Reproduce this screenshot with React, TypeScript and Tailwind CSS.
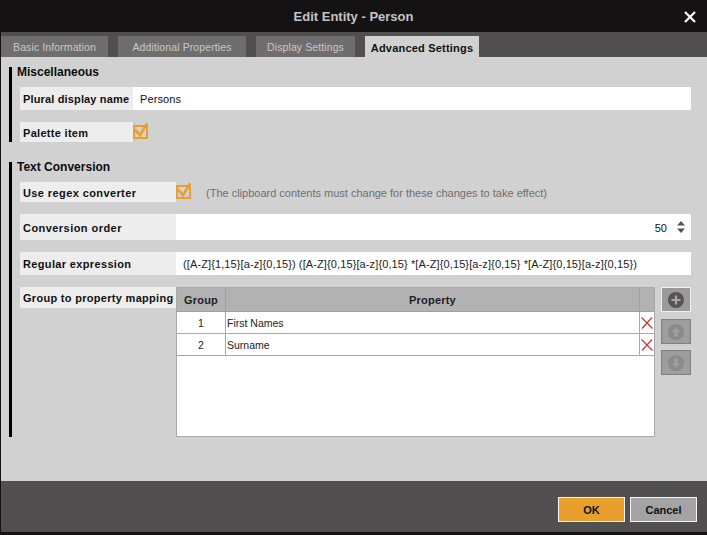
import React from "react";

function Check() {
  return (
    <div className="relative w-[15px] h-[14px] mt-[3px] border-2 border-[#e89f2b]">
      <svg className="absolute left-[-2px] top-[-5px]" width="18" height="18" viewBox="0 0 18 18">
        <path d="M2 7.5 L7 13.2 L14 1.4" fill="none" stroke="#e89f2b" strokeWidth="2.6" />
      </svg>
    </div>
  );
}

function Section({ title, children, className }: { title: string; children: React.ReactNode; className: string }) {
  return (
    <section className={`flex ${className}`}>
      <div className="w-[3px] bg-black" />
      <div className="flex-1 pl-[5px]">
        <h2 className="h-[20px] leading-[10px] text-[12px] font-bold text-[#0d0d0d]">{title}</h2>
        {children}
      </div>
    </section>
  );
}

function Label({ w, h, tracking, children }: { w: string; h: string; tracking: string; children: React.ReactNode }) {
  return (
    <div className={`${w} ${h} ${tracking} shrink-0 bg-[#ededed] pl-[3px] pt-[2px] flex items-center text-[11px] font-bold text-[#111] whitespace-nowrap`}>
      {children}
    </div>
  );
}

function Row({ group, name }: { group: string; name: string }) {
  return (
    <div className="flex h-[22px] border-b border-[#a9a9a9] text-[10.5px] text-[#222]">
      <div className="w-[49px] pt-[2px] border-r border-[#a9a9a9] flex items-center justify-center">{group}</div>
      <div className="flex-1 pt-[2px] pl-[1px] flex items-center">{name}</div>
      <div className="w-[15px] border-l border-[#a9a9a9] flex items-center justify-center">
        <svg width="12" height="12" viewBox="0 0 12 12">
          <path d="M0.5 0.5 L11.5 11.5 M11 0.5 L1 11.5" stroke="#b8403f" strokeWidth="1.3" fill="none" />
        </svg>
      </div>
    </div>
  );
}

function SideButton({ active, dir, className }: { active?: boolean; dir: "plus" | "up" | "down"; className?: string }) {
  const fill = active ? "#555354" : "#8a8a8a";
  return (
    <div className={`w-[30px] h-[25px] flex items-center justify-center border ${active ? "border-[#f2f2f2] bg-[#9a9a9a]" : "border-[#808080] bg-[#9d9d9d]"} ${className ?? ""}`}>
      <svg width="16" height="16" viewBox="0 0 16 16">
        <circle cx="8" cy="8" r="8" fill={fill} />
        {dir === "plus" && <path d="M8 3.5V12.5M3.5 8H12.5" stroke="#a9a9a9" strokeWidth="2.2" />}
        {dir === "up" && <path d="M8 3 L12.5 8 H10 V12.5 H6 V8 H3.5 Z" fill="#9d9d9d" />}
        {dir === "down" && <path d="M8 13 L12.5 8 H10 V3.5 H6 V8 H3.5 Z" fill="#9d9d9d" />}
      </svg>
    </div>
  );
}

const tabs = [
  { t: "Basic Information", w: "w-[107px]" },
  { t: "Additional Properties", w: "w-[128px]" },
  { t: "Display Settings", w: "w-[99px]" },
];

export default function App() {
  return (
    <div className="w-[707px] h-[535px] flex flex-col bg-[#141213] font-['Liberation_Sans',Arial,sans-serif] overflow-hidden">
      <header className="h-[32px] shrink-0 relative flex items-center justify-center pt-[2px] text-[13px] font-bold text-[#c4c4c4]">
        Edit Entity - Person
        <svg className="absolute left-[684px] top-[11px]" width="12" height="12" viewBox="0 0 12 12">
          <path d="M1 1 L11 11 M11 1 L1 11" stroke="#f4f4f4" strokeWidth="2.4" />
        </svg>
      </header>
      <div className="flex-1 ml-px flex flex-col bg-[#514f50]">
        <nav className="h-[25px] shrink-0 pt-[4px] flex gap-[10px]">
          {tabs.map((x) => (
            <div key={x.t} className={`${x.w} h-[21px] pt-[3px] bg-[#6f6d6e] text-[#c9c9c9] text-[10.5px] tracking-[0.1px] flex items-center justify-center`}>
              {x.t}
            </div>
          ))}
          <div className="w-[114px] h-[21px] pt-[3px] bg-[#d1d1d1] text-[#111] text-[11px] font-bold tracking-[0.2px] flex items-center justify-center">
            Advanced Settings
          </div>
        </nav>
        <main className="h-[424px] shrink-0 bg-[#d1d1d1] pl-[8px] pr-[16px] pt-[10px]">
          <Section title="Miscellaneous" className="h-[75px]">
            <div className="pl-[3px]">
              <div className="flex h-[23px]">
                <Label w="w-[113px]" h="h-[23px]" tracking="tracking-[0.15px]">Plural display name</Label>
                <div className="flex-1 bg-white pl-[7px] pt-[2px] flex items-center text-[11px] tracking-[0.1px] text-[#111]">Persons</div>
              </div>
              <div className="flex h-[20px] mt-[12px]">
                <Label w="w-[113px]" h="h-[20px]" tracking="tracking-[0.3px]">Palette item</Label>
                <Check />
              </div>
            </div>
          </Section>
          <Section title="Text Conversion" className="h-[275px] mt-[20px]">
            <div className="pl-[3px]">
              <div className="flex h-[20px]">
                <Label w="w-[156px]" h="h-[20px]" tracking="tracking-[0.4px]">Use regex converter</Label>
                <Check />
                <div className="ml-[15px] pt-[2px] flex items-center text-[11px] text-[#6e6e6e] whitespace-nowrap">
                  (The clipboard contents must change for these changes to take effect)
                </div>
              </div>
              <div className="flex h-[26px] mt-[12px]">
                <Label w="w-[156px]" h="h-[26px]" tracking="tracking-[0.45px]">Conversion order</Label>
                <div className="flex-1 bg-white flex items-center justify-end text-[11px] text-[#111]">
                  <span className="pt-[2px]">50</span>
                  <svg className="ml-[10px] mr-[6px]" width="8" height="14" viewBox="0 0 8 14">
                    <path d="M4 1 L8 5.5 H0 Z M4 13 L8 8.5 H0 Z" fill="#555354" />
                  </svg>
                </div>
              </div>
              <div className="flex h-[23px] mt-[12px]">
                <Label w="w-[156px]" h="h-[23px]" tracking="tracking-[0.35px]">Regular expression</Label>
                <div className="flex-1 bg-white pl-[7px] pt-[2px] flex items-center text-[11px] tracking-[0.11px] text-[#222] whitespace-nowrap">
                  {"([A-Z]{1,15}[a-z]{0,15}) ([A-Z]{0,15}[a-z]{0,15} *[A-Z]{0,15}[a-z]{0,15} *[A-Z]{0,15}[a-z]{0,15})"}
                </div>
              </div>
              <div className="flex mt-[12px]">
                <Label w="w-[156px]" h="h-[21px]" tracking="tracking-[0.3px]">Group to property mapping</Label>
                <div className="w-[479px] h-[150px] shrink-0 bg-white border border-[#a9a9a9]">
                  <div className="flex h-[24px] bg-[#b2b2b2] border-b border-[#a0a0a0] text-[11px] font-bold tracking-[0.2px] text-[#222]">
                    <div className="w-[49px] pt-[2px] border-r border-[#a0a0a0] flex items-center justify-center">Group</div>
                    <div className="flex-1 pt-[2px] flex items-center justify-center">Property</div>
                    <div className="w-[15px] border-l border-[#a0a0a0]" />
                  </div>
                  <Row group="1" name="First Names" />
                  <Row group="2" name="Surname" />
                </div>
                <div className="ml-[6px] flex flex-col gap-[6px]">
                  <SideButton active dir="plus" />
                  <SideButton dir="up" className="mt-px" />
                  <SideButton dir="down" />
                </div>
              </div>
            </div>
          </Section>
        </main>
        <footer className="h-[51px] shrink-0 flex justify-end gap-[5px] pt-[16px] pr-[10px]">
          <div className="w-[67px] h-[25px] pt-[1px] bg-[#e89f2b] border border-[#f4f4f4] flex items-center justify-center text-[11px] font-bold text-[#111]">OK</div>
          <div className="w-[67px] h-[25px] pt-[1px] bg-[#a3a3a3] border border-[#f4f4f4] flex items-center justify-center text-[11px] font-bold text-[#111]">Cancel</div>
        </footer>
        <div className="h-[3px] bg-[#141213]" />
      </div>
    </div>
  );
}
